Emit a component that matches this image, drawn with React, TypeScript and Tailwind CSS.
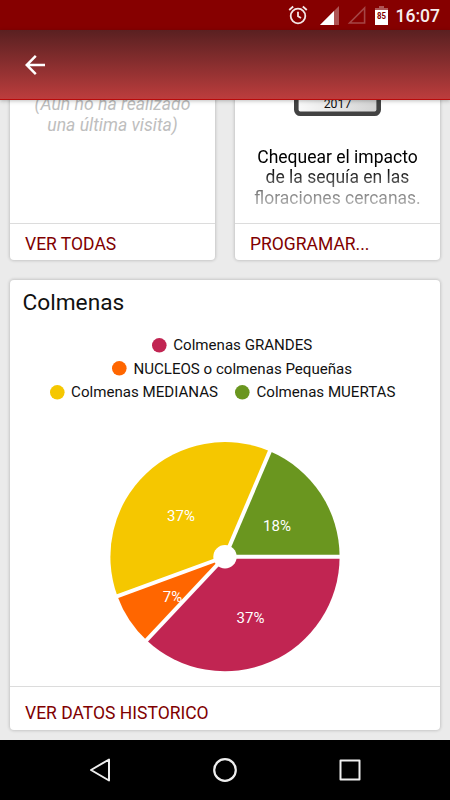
import type { ReactNode } from "react";
import { twJoin } from "tailwind-merge";

interface Slice {
  label: string;
  value: number;
  text: string;
  color: string;
  labelX: number;
  labelY: number;
}

const SLICES: Slice[] = [
  { label: "Colmenas GRANDES", value: 37, text: "37%", color: "#c12552", labelX: 140.5, labelY: 181 },
  { label: "NUCLEOS o colmenas Pequeñas", value: 7.4, text: "7%", color: "#ff6600", labelX: 62.5, labelY: 159.5 },
  { label: "Colmenas MEDIANAS", value: 37, text: "37%", color: "#f5c700", labelX: 71, labelY: 79 },
  { label: "Colmenas MUERTAS", value: 18.6, text: "18%", color: "#6a961f", labelX: 167, labelY: 89 },
];

const LEGEND_ROWS = [[SLICES[0]], [SLICES[1]], [SLICES[2], SLICES[3]]];

export default function App() {
  return (
    <div className="w-[450px] h-[800px] flex flex-col overflow-hidden bg-[#ebebeb] font-['Roboto',sans-serif]">
      <StatusBar />
      <Toolbar />
      <main className="flex-1 min-h-0 flex flex-col justify-end gap-[20px] px-[10px] pb-[10px] overflow-hidden">
        <div className="shrink-0 flex flex-row gap-[20px]">
          <Card footer="VER TODAS" className="flex-1 h-[180px]">
            <p className="pt-[14px] text-center text-[17.6px] italic leading-[20.5px] text-[#bebebe]">
              (Aún no ha realizado
              <br />
              una última visita)
            </p>
          </Card>
          <Card footer="PROGRAMAR..." className="flex-1 h-[180px]">
            <CalendarIcon />
            <p className="mt-[30.5px] text-center text-[17.5px] leading-[20.7px] whitespace-nowrap bg-linear-to-b from-black from-28% via-[#4c4c4c] via-54% to-[#c4c4c4] bg-clip-text text-transparent">
              Chequear el impacto
              <br />
              de la sequía en las
              <br />
              floraciones cercanas.
            </p>
          </Card>
        </div>
        <Card footer="VER DATOS HISTORICO" className="shrink-0 h-[450px]" footerClassName="h-[44px] pt-[10px]">
          <h2 className="pl-[12.5px] pt-[9px] text-[22.7px] leading-[28px] text-[#111]">Colmenas</h2>
          <Legend />
          <PieChart />
        </Card>
      </main>
      <NavigationBar />
    </div>
  );
}

const StatusBar = () => (
  <div className="h-[30px] shrink-0 bg-[#860000] flex flex-row items-center justify-end pr-[10px]">
    <svg className="w-[20px] h-[20px] mr-[12px]" viewBox="0 0 20 20" fill="none" stroke="#f3e6e6" strokeWidth="1.8">
      <circle cx="10" cy="11" r="7.3" />
      <path d="M10 6.8v4.4l3 1.9M1.2 5l4-3.5M18.8 5l-4-3.5" />
    </svg>
    <svg className="w-[19px] h-[19px] mr-[8px]" viewBox="0 0 19 19">
      <path d="M19 0v19H0z" fill="#ae5454" />
      <path d="M14 5v14H0z" fill="#fff" />
    </svg>
    <svg className="w-[19px] h-[19px] mr-[9px]" viewBox="0 0 19 19">
      <path d="M17.6 2v15H2.6z" fill="none" stroke="#a54545" strokeWidth="1.6" />
    </svg>
    <svg className="w-[13px] h-[19px] mr-[8px]" viewBox="0 0 13 19">
      <path d="M4 0h5v2h4v3H0V2h4z" fill="#ae5454" />
      <path d="M0 4h13v15H0z" fill="#fff" />
      <text x="2" y="12.6" textLength="9" lengthAdjust="spacingAndGlyphs" fontSize="9" fontWeight="700" fill="#860000">
        85
      </text>
    </svg>
    <span className="text-[17.5px] font-medium leading-[30px] text-[#f7eeee] pt-[2px]">16:07</span>
  </div>
);

const Toolbar = () => (
  <header className="relative z-10 h-[70px] shrink-0 flex items-center pl-[25px] border-b border-[#b80b0b] bg-linear-to-b from-[#5a2021] to-[#bc3d3d] shadow-[0_1px_4px_rgba(0,0,0,0.25)]">
    <svg className="w-[20px] h-[20px]" viewBox="0 0 20 20" fill="none" stroke="#fff" strokeWidth="2.5">
      <path d="M20 10H2M10.8 .9L1.7 10l9.1 9.1" />
    </svg>
  </header>
);

const Card = ({
  footer,
  className,
  footerClassName = "h-[37px] pt-[4px]",
  children,
}: {
  footer: string;
  className?: string;
  footerClassName?: string;
  children: ReactNode;
}) => (
  <section
    className={twJoin(
      "flex flex-col rounded-[4px] bg-white shadow-[0_0_3px_1px_rgba(0,0,0,0.16)]",
      className
    )}
  >
    <div className="flex-1 min-h-0">{children}</div>
    <div
      className={twJoin(
        "shrink-0 border-t border-[#dcdcdc] pl-[15px] text-[17.5px] leading-[32px] text-[#800000]",
        footerClassName
      )}
    >
      {footer}
    </div>
  </section>
);

const CalendarIcon = () => (
  <svg className="block mx-auto w-[87px] h-[36px]" viewBox="0 0 87 36">
    <defs>
      <linearGradient id="calendarPage">
        <stop offset="0" stopColor="#fafafa" />
        <stop offset="1" stopColor="#d2d2d2" />
      </linearGradient>
    </defs>
    <rect x="2.3" y="-20" width="82.4" height="53.7" rx="4" fill="url(#calendarPage)" stroke="#424242" strokeWidth="4.6" />
    <text x="43.5" y="28" textAnchor="middle" fontSize="12.3" fill="#111">
      2017
    </text>
  </svg>
);

const Legend = () => (
  <div className="mt-[17px] flex flex-col items-center">
    {LEGEND_ROWS.map((row) => (
      <div
        key={row[0].label}
        className={twJoin(
          "h-[23.5px] flex flex-row items-center gap-[17px]",
          row.length === 1 ? "pl-[14px]" : "pr-[5px]"
        )}
      >
        {row.map((slice) => (
          <div key={slice.label} className="flex flex-row items-center gap-[6.5px]">
            <svg className="w-[15px] h-[15px] -mt-px" viewBox="0 0 15 15">
              <circle cx="7.3" cy="7.3" r="7.3" fill={slice.color} />
            </svg>
            <span className="text-[15.1px] leading-[23px] text-[#111]">{slice.label}</span>
          </div>
        ))}
      </div>
    ))}
  </div>
);

const CENTER_X = 115;
const CENTER_Y = 114.7;
const RADIUS = 114.6;

const pointAt = (percent: number) => {
  const angle = (percent / 100) * Math.PI * 2;
  return [CENTER_X + RADIUS * Math.cos(angle), CENTER_Y + RADIUS * Math.sin(angle)];
};

const PieChart = () => {
  // slices run clockwise from three o'clock
  const starts = SLICES.map((_, i) => SLICES.slice(0, i).reduce((sum, s) => sum + s.value, 0));

  return (
    <svg className="block mx-auto mt-[37px] w-[230px] h-[230px]" viewBox="0 0 230 230">
      {SLICES.map((slice, i) => {
        const [x1, y1] = pointAt(starts[i]);
        const [x2, y2] = pointAt(starts[i] + slice.value);
        return (
          <path
            key={slice.label}
            d={`M${CENTER_X} ${CENTER_Y}L${x1} ${y1}A${RADIUS} ${RADIUS} 0 0 1 ${x2} ${y2}Z`}
            fill={slice.color}
          />
        );
      })}
      {starts.map((start) => {
        const [x, y] = pointAt(start);
        return <line key={start} x1={CENTER_X} y1={CENTER_Y} x2={x} y2={y} stroke="#fff" strokeWidth="4" strokeLinecap="square" />;
      })}
      <circle cx={CENTER_X} cy={CENTER_Y} r="11.7" fill="#fff" />
      {SLICES.map((slice) => (
        <text key={slice.label} x={slice.labelX} y={slice.labelY} textAnchor="middle" fontSize="15" fill="#fff">
          {slice.text}
        </text>
      ))}
    </svg>
  );
};

const NavigationBar = () => (
  <nav className="h-[60px] shrink-0 bg-black flex flex-row items-center justify-center gap-[101px]">
    <svg className="w-[24px] h-[24px]" viewBox="0 0 24 24" fill="none" stroke="#eee" strokeWidth="2" strokeLinejoin="round">
      <path d="M21 1.5v21L3 12z" />
    </svg>
    <svg className="w-[24px] h-[24px]" viewBox="0 0 24 24" fill="none" stroke="#eee" strokeWidth="2.2">
      <circle cx="12" cy="12" r="10.8" />
    </svg>
    <svg className="w-[24px] h-[24px]" viewBox="0 0 24 24" fill="none" stroke="#eee" strokeWidth="2" strokeLinejoin="round">
      <rect x="2.5" y="2.5" width="19" height="19" />
    </svg>
  </nav>
);
